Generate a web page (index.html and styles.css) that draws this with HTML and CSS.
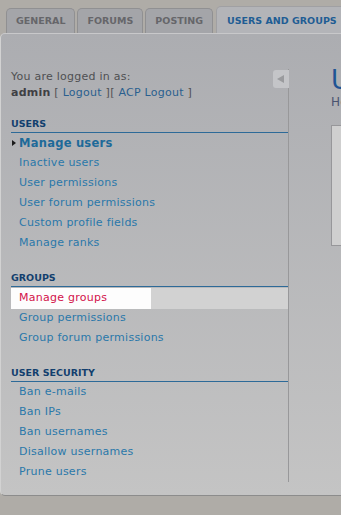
FILE: index.html
```html
<!DOCTYPE html>
<html lang="en">
<head>
  <meta charset="UTF-8" />
  <title>Users and groups | ACP</title>
  <link rel="stylesheet" href="styles.css">
</head>
<body>
  <div class="tabs">
    <a href="#" class="tab">General</a>
    <a href="#" class="tab">Forums</a>
    <a href="#" class="tab">Posting</a>
    <a href="#" class="tab tab-active">Users and groups</a>
  </div>
  <div class="panel">
    <div class="sidebar">
      <a href="#" class="collapse" title="Hide menu"></a>
      <p class="login">You are logged in as:<br />
        <strong>admin</strong> [ <a href="#">Logout</a> ][ <a href="#">ACP Logout</a> ]</p>

      <div class="menu-head">Users</div>
      <ul class="menu">
        <li class="current"><a href="#">Manage users</a></li>
        <li><a href="#">Inactive users</a></li>
        <li><a href="#">User permissions</a></li>
        <li><a href="#">User forum permissions</a></li>
        <li><a href="#">Custom profile fields</a></li>
        <li><a href="#">Manage ranks</a></li>
      </ul>

      <div class="menu-head">Groups</div>
      <ul class="menu">
        <li class="hover"><a href="#">Manage groups</a></li>
        <li><a href="#">Group permissions</a></li>
        <li><a href="#">Group forum permissions</a></li>
      </ul>

      <div class="menu-head">User security</div>
      <ul class="menu">
        <li><a href="#">Ban e-mails</a></li>
        <li><a href="#">Ban IPs</a></li>
        <li><a href="#">Ban usernames</a></li>
        <li><a href="#">Disallow usernames</a></li>
        <li><a href="#">Prune users</a></li>
      </ul>
    </div>
    <div class="main">
      <h1>Users</h1>
      <p class="intro">Here you can manage users.</p>
      <div class="box"></div>
    </div>
  </div>
</body>
</html>
```

FILE: styles.css
```css
* {
  box-sizing: border-box;
  margin: 0;
  padding: 0;
}
html, body {
  overflow: hidden;
}
body {
  background-color: #afaca7;
  font-family: 'DejaVu Sans', Verdana, sans-serif;
  font-size: 11px;
  letter-spacing: 0.25px;
  color: #4f4f52;
  width: 341px;
  height: 515px;
}
a {
  text-decoration: none;
  color: #2a78aa;
}
.tabs {
  display: flex;
  align-items: flex-end;
  gap: 2px;
  padding: 7px 0 0 6px;
  height: 33px;
  width: 600px;
}
.tab {
  display: block;
  height: 25px;
  line-height: 24px;
  padding: 0 9px;
  background: #a4a5a9;
  border: 1px solid #909092;
  border-bottom: none;
  border-radius: 5px 5px 0 0;
  color: #66666a;
  font-weight: bold;
  font-size: 9.5px;
  letter-spacing: 0;
  text-transform: uppercase;
}
.tab-active {
  height: 27px;
  line-height: 27px;
  margin-left: 1px;
  background: #b3b4b8;
  border-color: #a0a0a3;
  color: #1f5d94;
  position: relative;
  z-index: 2;
  padding: 0 10px 0 10px;
}
.panel {
  display: flex;
  width: 660px;
  height: 463px;
  border: 1px solid #8c8c8c;
  border-top-color: #c8c8ca;
  border-left-color: #d2d2d2;
  border-radius: 5px;
  background: linear-gradient(#acadb1, #c4c4c4);
}
.sidebar {
  position: relative;
  flex-shrink: 0;
  width: 288px;
  margin-top: 35px;
  margin-bottom: 13px;
  padding-left: 10px;
  border-right: 1px solid #98989a;
}
.collapse {
  position: absolute;
  top: 1px;
  right: -1px;
  width: 16px;
  height: 18px;
  background: #c4c5c8;
  border-radius: 3px 0 0 3px;
}
.collapse::after {
  content: "";
  position: absolute;
  top: 5px;
  left: 4px;
  border-style: solid;
  border-width: 4px 7px 4px 0;
  border-color: transparent #9a9b9e transparent transparent;
}
.login {
  line-height: 16px;
}
.login strong {
  color: #3f3f44;
}
.login a {
  color: #2a5f8f;
}
.menu-head {
  margin-top: 17px;
  line-height: 16px;
  border-bottom: 1px solid #2d6a98;
  color: #123f6e;
  font-weight: bold;
  font-size: 9.5px;
  letter-spacing: 0;
  text-transform: uppercase;
}
.login + .menu-head {
  margin-top: 15px;
}
.menu {
  list-style: none;
  margin-left: -10px;
}
.menu li {
  line-height: 20px;
  padding-left: 18px;
}
.menu li.current {
  position: relative;
  font-weight: bold;
  font-size: 11.5px;
}
.menu li.current a {
  color: #1e6a99;
}
.menu li.current::before {
  content: "";
  position: absolute;
  left: 11px;
  top: 7px;
  border-style: solid;
  border-width: 3px 0 3px 4px;
  border-color: transparent transparent transparent #1b1b1b;
}
.menu li.hover {
  background: linear-gradient(90deg, #fdfdfd 0, #fdfdfd 140px, #d2d2d2 140px);
  margin-left: 10px;
  padding-left: 8px;
  height: 21px;
  margin-top: 1px;
  margin-bottom: -1px;
}
.menu li.hover a {
  color: #d3124a;
}
.main {
  padding: 31px 0 0 42px;
  flex: 1;
}
.main h1 {
  font-weight: normal;
  font-size: 26px;
  line-height: 30px;
  letter-spacing: 0;
  color: #1f5494;
  white-space: nowrap;
}
.intro {
  line-height: 14px;
  color: #4a5370;
  font-size: 12px;
  white-space: nowrap;
}
.box {
  margin-top: 16px;
  width: 300px;
  height: 121px;
  background: #cfcfcf;
  border: 1px solid #97979a;
}
```
